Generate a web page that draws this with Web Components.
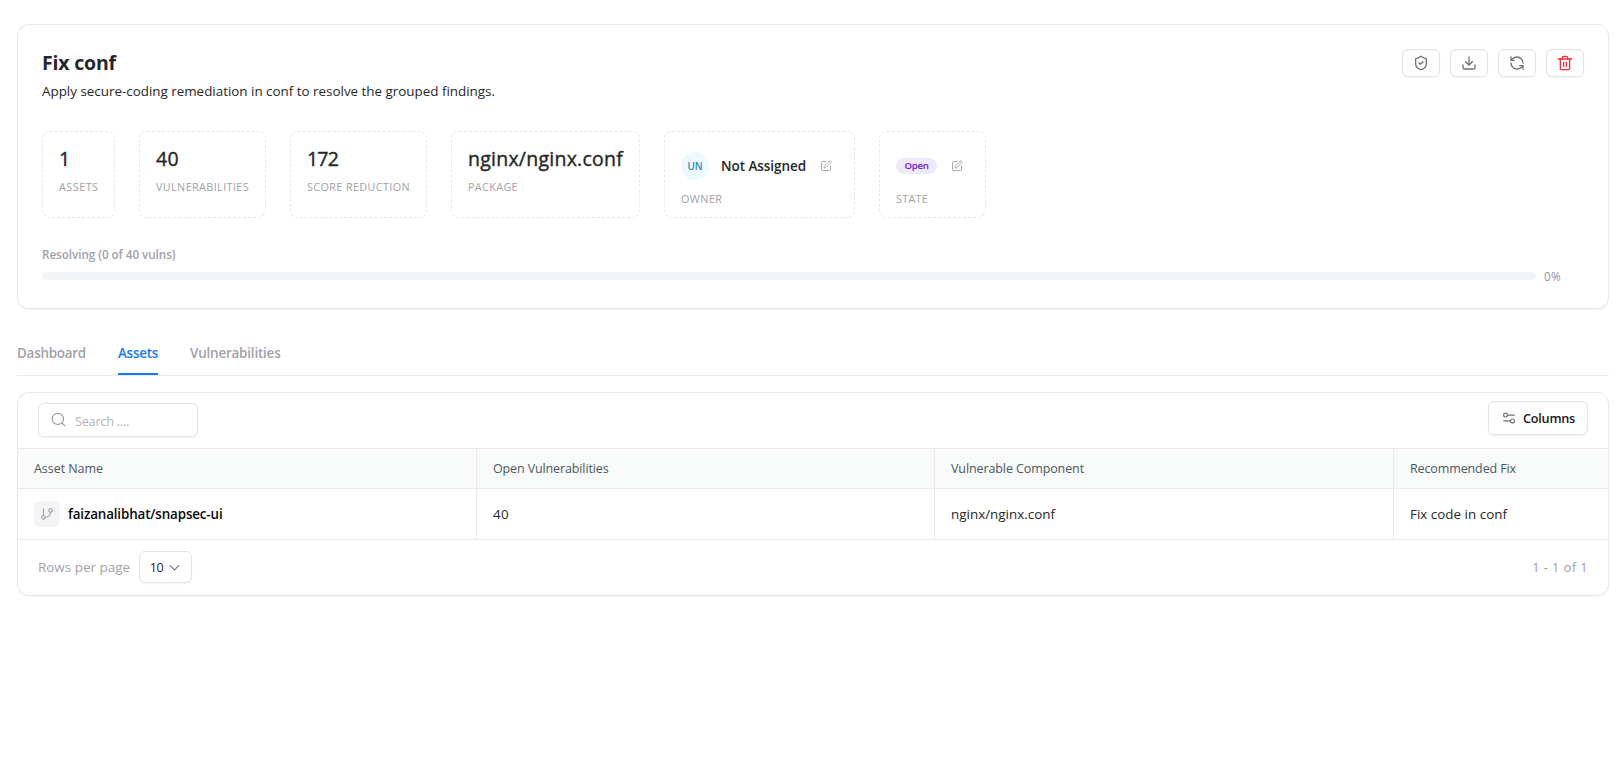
<!DOCTYPE html>
<html lang="en">
<head>
<meta charset="utf-8">
<title>Fix conf</title>
<style>
html,body{margin:0;background:#fff}
body{font-family:"Open Sans","Noto Sans",sans-serif;color:#27272a;min-height:761px;overflow:hidden}
</style>
</head>
<body>
<fix-page></fix-page>
<script>
const ICONS = {
  shield:'<path d="M20 13c0 5-3.5 7.5-7.66 8.95a1 1 0 0 1-.67-.01C7.500 20.500 4 18 4 13V6a1 1 0 0 1 1-1c2 0 4.500-1.200 6.240-2.720a1.170 1.170 0 0 1 1.520 0C14.510 3.810 17 5 19 5a1 1 0 0 1 1 1z"/><path d="m9 12 2 2 4-4"/>',
  download:'<path d="M21 15v4a2 2 0 0 1-2 2H5a2 2 0 0 1-2-2v-4"/><path d="m7 10 5 5 5-5"/><path d="M12 15V3"/>',
  refresh:'<path d="M21 12a9 9 0 0 0-9-9 9.750 9.750 0 0 0-6.740 2.740L3 8"/><path d="M3 3v5h5"/><path d="M3 12a9 9 0 0 0 9 9 9.750 9.750 0 0 0 6.740-2.740L21 16"/><path d="M16 16h5v5"/>',
  trash:'<path d="M2 6h20"/><path d="M19 6v14a2 2 0 0 1-2 2H7a2 2 0 0 1-2-2V6"/><path d="M8 6V4a2 2 0 0 1 2-2h4a2 2 0 0 1 2 2v2"/><path d="M10 11v6M14 11v6"/>',
  edit:'<path d="M12 3H5a2 2 0 0 0-2 2v14a2 2 0 0 0 2 2h14a2 2 0 0 0 2-2v-7"/><path d="M18.400 2.600a2.100 2.100 0 0 1 3 3l-9 9a2 2 0 0 1-.85.500l-2.900.84a.5.5 0 0 1-.62-.62l.84-2.900a2 2 0 0 1 .5-.85z"/>',
  search:'<circle cx="11" cy="11" r="9"/><path d="m22 22-4.500-4.500"/>',
  columns:'<path d="M10 7h11"/><circle cx="6" cy="7" r="3.300"/><path d="M14 17H3"/><circle cx="18" cy="17" r="3.300"/>',
  branch:'<path d="M6 3v12"/><circle cx="18" cy="6" r="3"/><circle cx="6" cy="18" r="3"/><path d="M18 9a9 9 0 0 1-9 9"/>',
  chevron:'<path d="m4 8.500 8 8 8-8"/>'
};
function define(name, css, html, setup){
  const t = document.createElement('template');
  t.innerHTML = `<style>*{box-sizing:border-box}${css}</style>${html}`;
  customElements.define(name, class extends HTMLElement{
    constructor(){ super(); this.attachShadow({mode:'open'}).append(t.content.cloneNode(true)); }
    connectedCallback(){ if(setup) setup(this, this.shadowRoot); }
  });
}

/* One line of text; "w" is its advance width, reached through letter-spacing. */
define('ui-text', ':host{display:block;white-space:nowrap;flex:none}span{display:inline-block}', '<span><slot></slot></span>', (el, root) => {
  const w = parseFloat(el.getAttribute('w'));
  if(!w) return;
  const n = el.textContent.length, span = root.querySelector('span');
  const natural = span.getBoundingClientRect().width;
  span.style.letterSpacing = ((w - natural) / n).toFixed(4) + 'px';
});
define('ui-icon', ':host{display:block;flex:none}svg{display:block;fill:none;stroke:currentColor;stroke-linecap:round;stroke-linejoin:round}', '<svg viewBox="0 0 24 24"></svg>', (el, root) => {
  const s = root.querySelector('svg'), size = el.getAttribute('size') || 16;
  s.setAttribute('width', size); s.setAttribute('height', size);
  s.setAttribute('stroke-width', el.getAttribute('stroke') || 2);
  s.innerHTML = ICONS[el.getAttribute('name')];
});
define('ui-card', ':host{display:block;box-sizing:border-box;border:1px solid #e9e9eb;border-radius:12px;background:#fff;box-shadow:0 1px 2px rgba(0,0,0,.05);overflow:hidden}', '<slot></slot>');
define('ui-button', ':host{display:flex;box-sizing:border-box;align-items:center;justify-content:center;border:1px solid #e4e4e7;border-radius:6px;background:#fff;box-shadow:0 1px 2px rgba(0,0,0,.05);flex:none}', '<slot></slot>');
define('stat-box', `:host{display:block;box-sizing:border-box;height:87px;border:1px dashed #e8e8ea;border-radius:8px;padding:15px 0 0 16px;flex:none}
 .v{height:24px;font-size:19.500px;line-height:24px;font-weight:500;color:#27272a}
 :host(:not([rich])) .v{-webkit-text-stroke:.4px #27272a}
 .l{margin-top:8px;font-size:10.800px;line-height:16px;color:#a1a1aa}
 :host([rich]) .v{height:36px;padding-top:2px;display:flex;align-items:center}`,
 '<div class="v"><slot></slot></div><div class="l"><slot name="label"></slot></div>');
define('person-chip', `:host{display:flex;align-items:center}
 .a{width:28px;height:28px;border-radius:50%;background:#ecfaff;color:#2f8ba8;display:flex;align-items:center;justify-content:center;font-size:10px;line-height:14px;font-weight:600}
 .n{margin-left:12px;font-size:13.500px;line-height:18px;font-weight:600}
 ui-icon{margin-left:14px;color:#a1a1aa}`,
 '<div class="a"><ui-text w="15">UN</ui-text></div><div class="n"><ui-text w="85">Not Assigned</ui-text></div><ui-icon name="edit" size="12" stroke="1.9"></ui-icon>');
define('state-chip', `:host{display:flex;align-items:center}
 .b{width:41px;height:16px;border-radius:8px;background:#ede9fe;color:#6d17d9;display:flex;align-items:center;justify-content:center;font-size:9.700px;line-height:16px;font-weight:600}
 ui-icon{margin-left:14px;color:#a1a1aa}`,
 '<div class="b"><ui-text w="24">Open</ui-text></div><ui-icon name="edit" size="12" stroke="1.9"></ui-icon>');
define('summary-card', `:host{display:block}
 ui-card{height:285px;padding:24px}
 header{display:flex;justify-content:space-between;height:82px}
 h1{margin:0;font-size:19.500px;line-height:28px;font-weight:700;color:#27272a}
 p{margin:2px 0 0;font-size:13.400px;line-height:24px;color:#27272a}
 .acts{display:flex;gap:10px}
 .acts ui-button{width:38px;height:28px;color:#71717a}
 .acts .del{color:#fb2c36}
 .stats{display:flex;gap:24px}
 .res{margin-top:27px;font-size:11.700px;line-height:18px;font-weight:600;color:#a1a1aa}
 .prog{display:flex;align-items:center;margin-top:3px;height:20px}
 .bar{width:1494px;height:8px;border-radius:4px;background:#f3f4f6}
 .pct{margin-left:8px;font-size:11.700px;line-height:16px;color:#8f929c}`,
 `<ui-card>
 <header><div><h1><ui-text w="74">Fix conf</ui-text></h1><p><ui-text w="453">Apply secure-coding remediation in conf to resolve the grouped findings.</ui-text></p></div>
 <div class="acts"><ui-button><ui-icon name="shield"></ui-icon></ui-button><ui-button><ui-icon name="download"></ui-icon></ui-button><ui-button><ui-icon name="refresh"></ui-icon></ui-button><ui-button class="del"><ui-icon name="trash"></ui-icon></ui-button></div></header>
 <div class="stats">
 <stat-box style="width:73px"><ui-text w="11">1</ui-text><ui-text slot="label" w="39.500">ASSETS</ui-text></stat-box>
 <stat-box style="width:127px"><ui-text w="23">40</ui-text><ui-text slot="label" w="93">VULNERABILITIES</ui-text></stat-box>
 <stat-box style="width:137px"><ui-text w="31">172</ui-text><ui-text slot="label" w="103">SCORE REDUCTION</ui-text></stat-box>
 <stat-box style="width:189px"><ui-text w="155">nginx/nginx.conf</ui-text><ui-text slot="label" w="50">PACKAGE</ui-text></stat-box>
 <stat-box rich style="width:191px"><person-chip></person-chip><ui-text slot="label" w="41.500">OWNER</ui-text></stat-box>
 <stat-box rich style="width:107px"><state-chip></state-chip><ui-text slot="label" w="32">STATE</ui-text></stat-box>
 </div>
 <div class="res"><ui-text w="133.500">Resolving (0 of 40 vulns)</ui-text></div>
 <div class="prog"><div class="bar"></div><div class="pct"><ui-text w="17">0%</ui-text></div></div>
 </ui-card>`);
define('tab-bar', `:host{display:flex;gap:32px;box-sizing:border-box;height:47px;border-bottom:1px solid #e9e9eb;margin-top:20px}
 .t{height:46px;padding-top:15px;font-size:13.400px;line-height:18px;font-weight:600;color:#a1a1aa;border-bottom:2px solid transparent}
 .on{color:#1877f2;border-color:#1877f2}`,
 '<div class="t"><ui-text w="69">Dashboard</ui-text></div><div class="t on"><ui-text w="40">Assets</ui-text></div><div class="t"><ui-text w="90.500">Vulnerabilities</ui-text></div>');
define('asset-table', `:host{display:block;margin-top:16px}
 ui-card{height:204px}
 .tools{display:flex;justify-content:space-between;height:55px;padding:8px 20px 0}
 .s{width:160px;height:34px;margin-top:2px;justify-content:flex-start;padding-left:12px;color:#a1a1aa;font-size:12.800px}
 .s ui-icon{margin-bottom:1px}
 .s ui-text{margin:2px 0 0 9px;color:#b4b4bb}
 .c{width:100px;height:34px;font-size:12.700px;font-weight:600;color:#18181b}
 .c ui-icon{color:#71717a;margin-right:7px;margin-left:1px}
 .grid{display:grid;grid-template-columns:459px 458px 459px 214px;grid-template-rows:40px 50px;border:solid #e9e9eb;border-width:1px 0}
 .grid>div{display:flex;align-items:center;padding-left:16px;border-right:1px solid #e9e9eb;font-size:13.400px;color:#27272a}
 .grid>.h{background:#f9fbfb;color:#4b5563;font-size:12.500px;border-bottom:1px solid #e9e9eb}
 .grid>.e{border-right:0}
 .bx{width:26px;height:26px;border-radius:6px;background:#f3f4f6;color:#a1a1aa;display:flex;align-items:center;justify-content:center;margin-right:8px}
 b{font-weight:600;color:#09090b}
 footer{display:flex;align-items:center;height:54px;padding:0 20px;font-size:13.400px;color:#a1a1aa}
 footer ui-button{width:53px;height:32px;margin-left:9px;color:#27272a;font-size:12.500px}
 footer ui-icon{margin-left:5px;color:#71717a}
 .pg{margin-left:auto}`,
 `<ui-card>
 <div class="tools"><ui-button class="s"><ui-icon name="search" size="15"></ui-icon><ui-text w="54">Search ....</ui-text></ui-button>
 <ui-button class="c"><ui-icon name="columns" size="14"></ui-icon><ui-text w="52">Columns</ui-text></ui-button></div>
 <div class="grid">
 <div class="h"><ui-text w="69">Asset Name</ui-text></div><div class="h"><ui-text w="115.500">Open Vulnerabilities</ui-text></div><div class="h"><ui-text w="133">Vulnerable Component</ui-text></div><div class="h e"><ui-text w="106">Recommended Fix</ui-text></div>
 <div><span class="bx"><ui-icon name="branch" size="14" stroke="2"></ui-icon></span><b><ui-text w="154.500">faizanalibhat/snapsec-ui</ui-text></b></div><div><ui-text w="16">40</ui-text></div><div><ui-text w="104">nginx/nginx.conf</ui-text></div><div class="e"><ui-text w="97">Fix code in conf</ui-text></div>
 </div>
 <footer><ui-text w="92">Rows per page</ui-text><ui-button><ui-text w="13.500">10</ui-text><ui-icon name="chevron" size="13"></ui-icon></ui-button><ui-text class="pg" w="56">1 - 1 of 1</ui-text></footer>
 </ui-card>`);
define('fix-page', ':host{display:block;padding:24px 7px 0 17px}', '<summary-card></summary-card><tab-bar></tab-bar><asset-table></asset-table>');
</script>
</body>
</html>
